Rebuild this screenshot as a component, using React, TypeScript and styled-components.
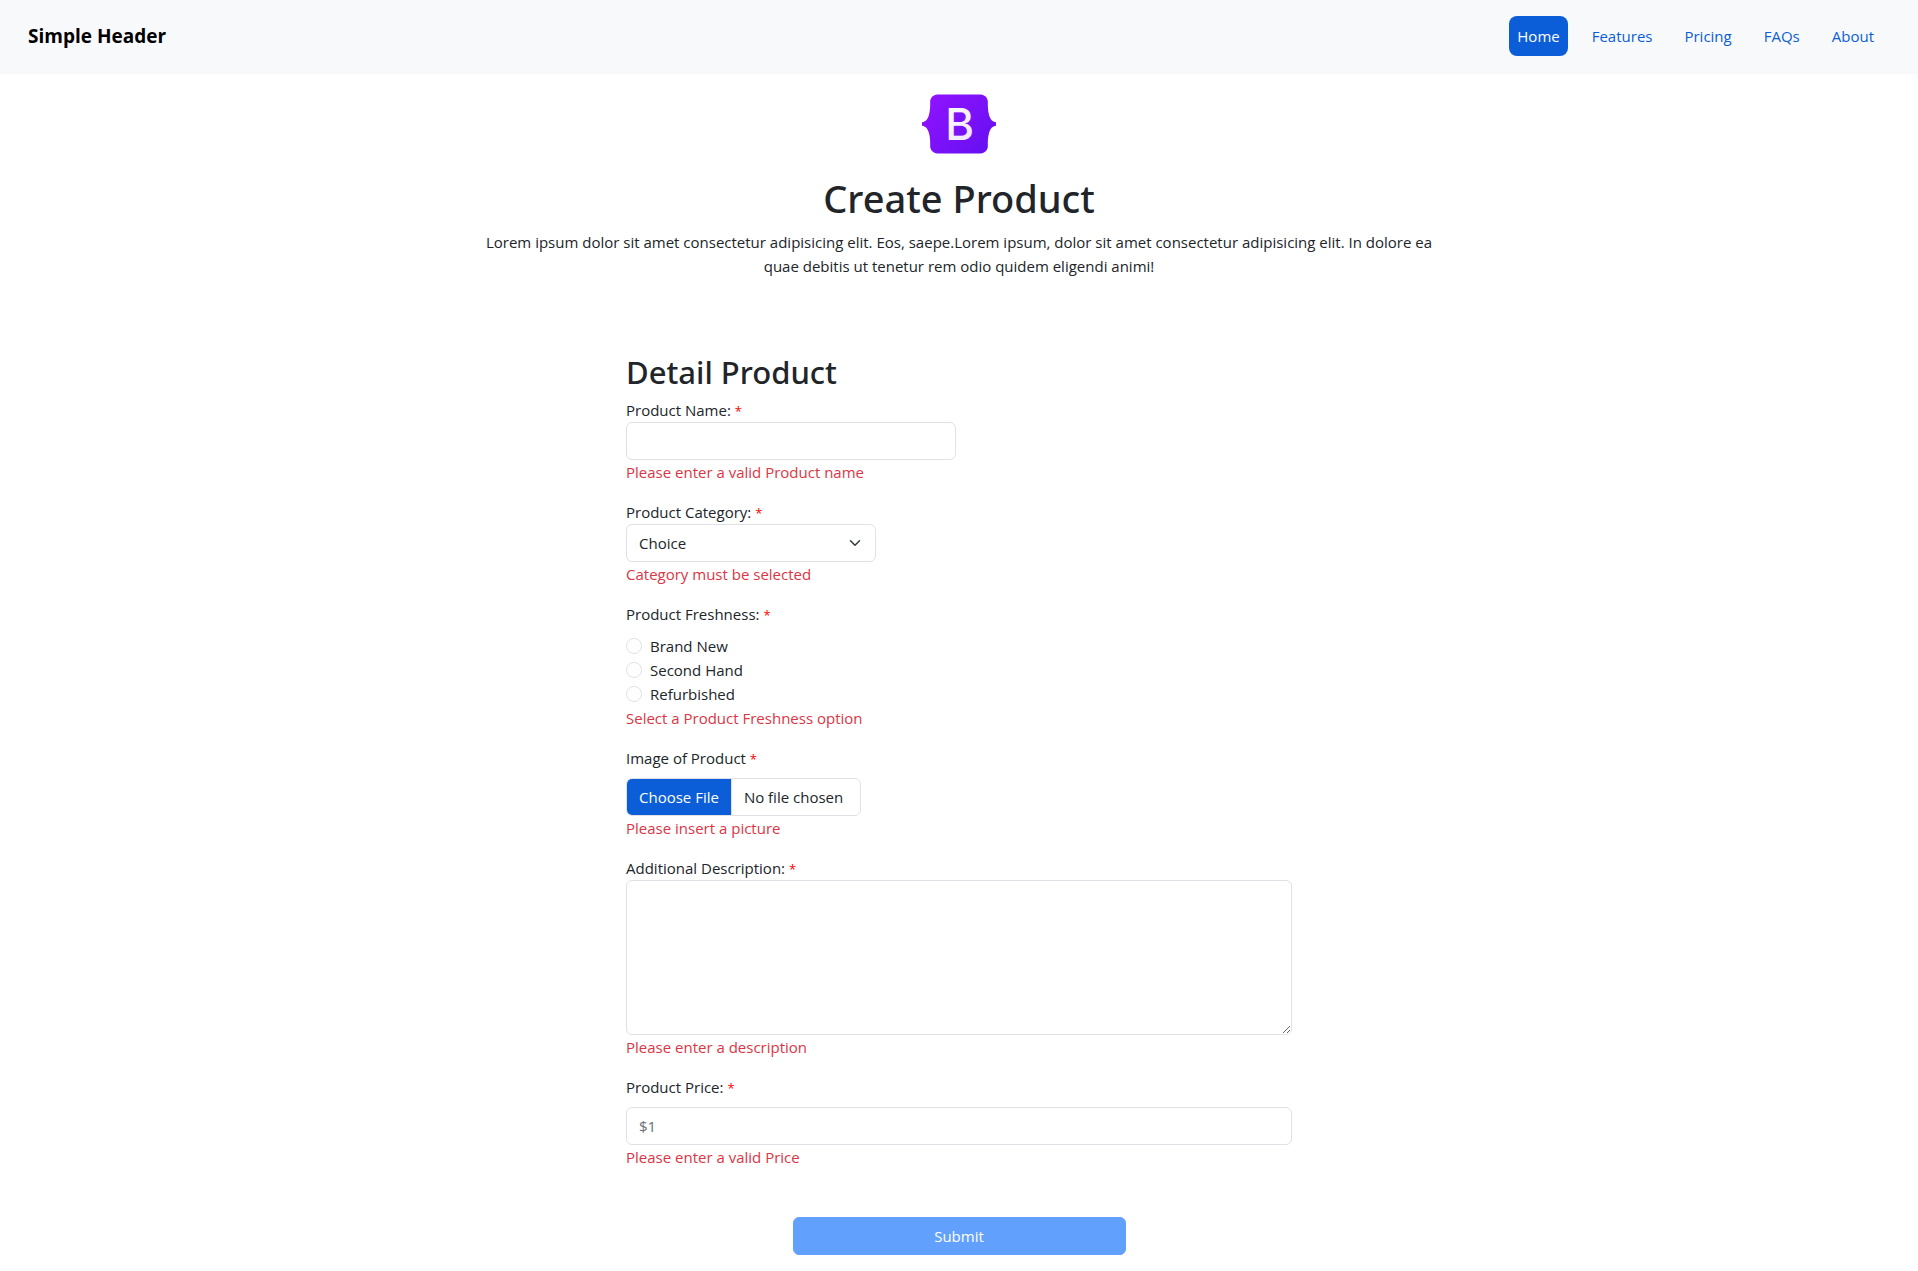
import React from "react";
import styled, { createGlobalStyle } from "styled-components";

const color = {
  primary: "#0b5ed7",
  submit: "#0d6efd",
  border: "#dee2e6",
  text: "#212529",
  danger: "#dc3545",
  header: "#f8f9fb",
};

const GlobalStyle = createGlobalStyle`
  *, *::before, *::after { box-sizing: border-box; }
  body {
    margin: 0;
    background: #fff;
    color: ${color.text};
    font-family: "Segoe UI", "Open Sans", "Noto Sans", sans-serif;
    font-size: 15px;
    line-height: 24px;
  }
  input, select, textarea, button { font: inherit; color: inherit; margin: 0; }
`;

const Header = styled.header`
  display: flex;
  align-items: center;
  justify-content: space-between;
  padding: 16px 28px 18px;
  background: ${color.header};
`;

const Brand = styled.a`
  color: #000;
  font-size: 19px;
  font-weight: 700;
  text-decoration: none;
`;

const NavList = styled.ul`
  display: flex;
  gap: 16px;
  margin: 0;
  padding: 0 8px 0 0;
  list-style: none;
`;

const NavLink = styled.a<{ $active?: boolean }>`
  display: block;
  padding: 8px;
  border-radius: 8px;
  text-decoration: none;
  color: ${(p) => (p.$active ? "#fff" : color.primary)};
  background: ${(p) => (p.$active ? color.primary : "transparent")};
`;

const Intro = styled.section`
  display: flex;
  flex-direction: column;
  align-items: center;
  width: 50%;
  min-width: 320px;
  margin: 0 auto;
  padding-top: 20px;
  text-align: center;
`;

const LogoMark = styled.svg`
  display: block;
  width: 74px;
  height: 60px;
  margin-bottom: 20px;
`;

const Title = styled.h1`
  margin: 0 0 8px;
  font-family: "Segoe UI", "Noto Sans", "Open Sans", sans-serif;
  font-size: 38px;
  font-weight: 500;
  line-height: 48px;
`;

const Lead = styled.p`
  margin: 0;
`;

const Form = styled.form`
  display: flex;
  flex-direction: column;
  gap: 16px;
  max-width: 666px;
  margin: 74px auto 0;
  padding-bottom: 16px;
`;

const SectionTitle = styled.h2`
  margin: 0 0 -10px;
  font-family: "Segoe UI", "Noto Sans", "Open Sans", sans-serif;
  font-size: 31px;
  font-weight: 500;
  line-height: 40px;
`;

const Field = styled.div`
  display: flex;
  flex-direction: column;
  align-items: flex-start;
`;

const RadioGroup = styled.fieldset`
  margin: 0;
  padding: 0;
  border: 0;
  min-width: 0;
`;

const Label = styled.label<{ $spaced?: boolean }>`
  margin-bottom: ${(p) => (p.$spaced ? "8px" : "0")};
`;

const Legend = styled.legend`
  padding: 0;
  margin-bottom: 8px;
`;

const Star = styled.span`
  color: red;
  font-size: 13px;
  line-height: 1;
`;

const ErrorText = styled.div`
  color: ${color.danger};
`;

const TextInput = styled.input<{ $narrow?: boolean }>`
  width: 100%;
  max-width: ${(p) => (p.$narrow ? "330px" : "none")};
  height: 38px;
  padding: 6px 12px;
  border: 1px solid ${color.border};
  border-radius: 6px;
  background: #fff;
  &::placeholder { color: #6b7075; opacity: 1; }
`;

const SelectWrap = styled.div`
  display: grid;
  align-items: center;
  width: 250px;
  & > * { grid-area: 1 / 1; }
`;

const Select = styled.select`
  appearance: none;
  width: 100%;
  height: 38px;
  padding: 6px 36px 6px 12px;
  border: 1px solid ${color.border};
  border-radius: 6px;
  background: #fff;
`;

const Chevron = styled.svg`
  justify-self: end;
  width: 16px;
  height: 12px;
  margin-right: 13px;
  pointer-events: none;
`;

const RadioRow = styled.div`
  display: flex;
  align-items: center;
  gap: 8px;
`;

const Radio = styled.input`
  appearance: none;
  width: 16px;
  height: 16px;
  border: 1px solid ${color.border};
  border-radius: 50%;
  background: #fff;
  &:checked { border: 5px solid ${color.primary}; }
`;

const FileInput = styled.input`
  width: 235px;
  height: 38px;
  padding: 6px 12px;
  overflow: hidden;
  border: 1px solid ${color.border};
  border-radius: 6px;
  background: #fff;
  &::file-selector-button {
    margin: -6px 12px -6px -12px;
    padding: 6px 12px;
    border: 0;
    border-right: 1px solid ${color.border};
    background: ${color.primary};
    color: #fff;
    font: inherit;
  }
`;

const TextArea = styled.textarea`
  display: block;
  width: 100%;
  height: 155px;
  padding: 6px 12px;
  border: 1px solid ${color.border};
  border-radius: 6px;
  background: #fff;
  resize: vertical;
`;

const Submit = styled.button`
  align-self: center;
  width: 50%;
  height: 38px;
  margin-top: 32px;
  border: 1px solid ${color.submit};
  border-radius: 6px;
  background: ${color.submit};
  color: #fff;
  opacity: 0.65;
`;

const navItems = ["Home", "Features", "Pricing", "FAQs", "About"];
const freshness = ["Brand New", "Second Hand", "Refurbished"];

function Logo() {
  return (
    <LogoMark viewBox="0 0 118 94" role="img" aria-label="Bootstrap">
      <defs>
        <linearGradient id="mark" x1="12" y1="2" x2="106" y2="92" gradientUnits="userSpaceOnUse">
          <stop stopColor="#9013fe" />
          <stop offset="1" stopColor="#6610f2" />
        </linearGradient>
        <linearGradient id="letter" x1="0" y1="0" x2="0.6" y2="1">
          <stop stopColor="#fff" />
          <stop offset="1" stopColor="#f1e5fc" />
        </linearGradient>
      </defs>
      <path
        fill="url(#mark)"
        d="M24.509 0c-6.733 0-11.715 5.893-11.492 12.284.214 6.14-.064 14.092-2.066 20.577C8.943 39.365 5.547 43.485 0 44.014v5.972c5.547.529 8.943 4.649 10.951 11.153 2.002 6.485 2.28 14.437 2.066 20.577C12.794 88.106 17.776 94 24.51 94H93.5c6.733 0 11.714-5.893 11.491-12.284-.214-6.14.064-14.092 2.066-20.577 2.009-6.504 5.396-10.624 10.943-11.153v-5.972c-5.547-.529-8.934-4.649-10.943-11.153-2.002-6.484-2.28-14.437-2.066-20.577C105.214 5.894 100.233 0 93.5 0H24.508z"
      />
      <text x="60" y="73" textAnchor="middle" fontFamily="Inter, sans-serif" fontSize="70" fontWeight="500" fill="url(#letter)">
        B
      </text>
    </LogoMark>
  );
}

export default function App() {
  return (
    <>
      <GlobalStyle />
      <Header>
        <Brand href="#">Simple Header</Brand>
        <nav>
          <NavList>
            {navItems.map((item, i) => (
              <li key={item}>
                <NavLink href="#" $active={i === 0} aria-current={i === 0 ? "page" : undefined}>
                  {item}
                </NavLink>
              </li>
            ))}
          </NavList>
        </nav>
      </Header>
      <main>
        <Intro>
          <Logo />
          <Title>Create Product</Title>
          <Lead>
            Lorem ipsum dolor sit amet consectetur adipisicing elit. Eos, saepe.Lorem ipsum, dolor sit amet
            consectetur adipisicing elit. In dolore ea quae debitis ut tenetur rem odio quidem eligendi animi!
          </Lead>
        </Intro>
        <Form onSubmit={(e) => e.preventDefault()}>
          <SectionTitle>Detail Product</SectionTitle>
          <Field>
            <Label htmlFor="name">Product Name: <Star>*</Star></Label>
            <TextInput id="name" type="text" $narrow />
            <ErrorText>Please enter a valid Product name</ErrorText>
          </Field>
          <Field>
            <Label htmlFor="category">Product Category: <Star>*</Star></Label>
            <SelectWrap>
              <Select id="category" defaultValue="">
                <option value="">Choice</option>
              </Select>
              <Chevron viewBox="0 0 16 16" aria-hidden="true">
                <path d="m2 5 6 6 6-6" fill="none" stroke="#343a40" strokeWidth="2" strokeLinecap="round" strokeLinejoin="round" />
              </Chevron>
            </SelectWrap>
            <ErrorText>Category must be selected</ErrorText>
          </Field>
          <RadioGroup>
            <Legend>Product Freshness: <Star>*</Star></Legend>
            {freshness.map((option, i) => (
              <RadioRow key={option}>
                <Radio type="radio" name="freshness" id={`freshness-${i}`} value={option} />
                <Label htmlFor={`freshness-${i}`}>{option}</Label>
              </RadioRow>
            ))}
            <ErrorText>Select a Product Freshness option</ErrorText>
          </RadioGroup>
          <Field>
            <Label htmlFor="image" $spaced>Image of Product <Star>*</Star></Label>
            <FileInput id="image" type="file" />
            <ErrorText>Please insert a picture</ErrorText>
          </Field>
          <Field>
            <Label htmlFor="description">Additional Description: <Star>*</Star></Label>
            <TextArea id="description" />
            <ErrorText>Please enter a description</ErrorText>
          </Field>
          <Field>
            <Label htmlFor="price" $spaced>Product Price: <Star>*</Star></Label>
            <TextInput id="price" type="text" placeholder="$1" />
            <ErrorText>Please enter a valid Price</ErrorText>
          </Field>
          <Submit type="submit" disabled>Submit</Submit>
        </Form>
      </main>
    </>
  );
}
